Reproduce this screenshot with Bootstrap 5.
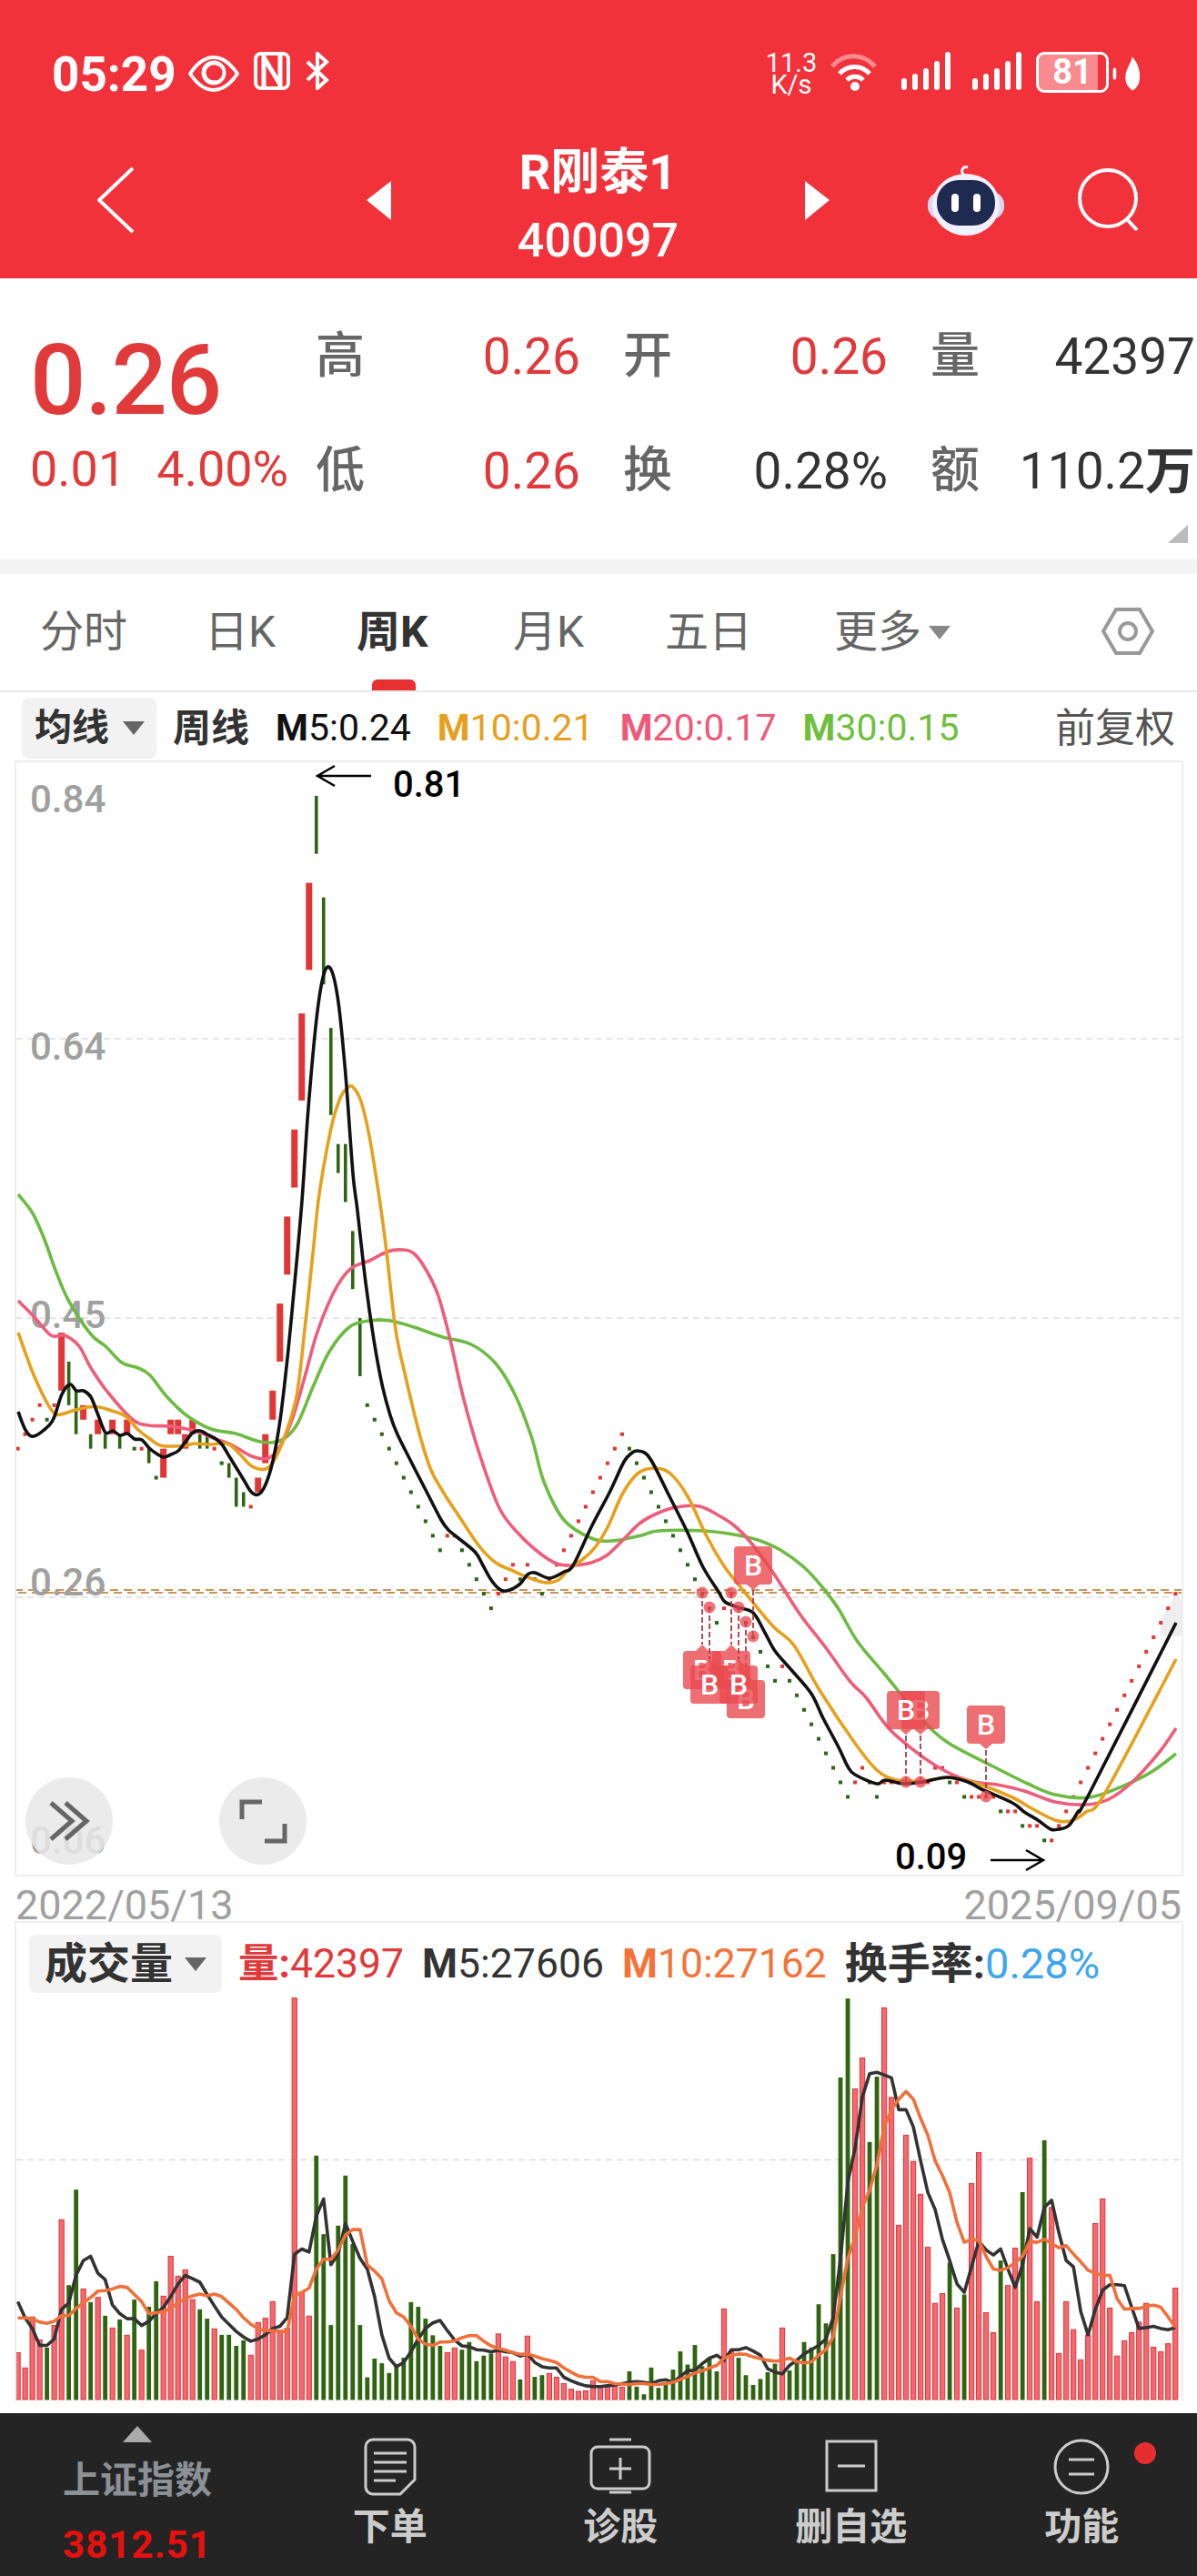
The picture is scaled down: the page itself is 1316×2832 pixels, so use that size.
<!DOCTYPE html>
<html lang="zh">
<head>
<meta charset="UTF-8" />
<meta name="viewport" content="width=device-width, initial-scale=1.0"/>
<title>R刚泰1 400097</title>
<link href="https://cdn.jsdelivr.net/npm/bootstrap@5.3.0/dist/css/bootstrap.min.css" rel="stylesheet" />
<style>
body { width: 1316px; height: 2832px; overflow: hidden; background: #fff; font-family: Roboto, "Noto Sans CJK SC", sans-serif; color: #333; }
svg { display: block; }

.app-head { height: 306px; background: #f1323b; color: #fff; }
.status-row { height: 150px; padding: 57px 62px 0 57px; align-items: flex-start; }
.clock { font-size: 53px; font-weight: 700; line-height: 50px; margin-right: 13px; }
.speed { font-size: 29px; line-height: 24px; width: 58px; text-align: center; margin-right: 13px; }
.batt { position: relative; width: 80px; height: 45px; border: 3px solid #fff; border-radius: 9px; background: linear-gradient(90deg, #f98a8f 88%, transparent 88%); font-size: 38px; font-weight: 700; line-height: 38px; text-align: center; }
.title-bar { height: 156px; padding: 0 0 16px 107px; align-items: center; }
.stock-name { width: 455px; text-align: center; margin-top: 16px; }
.stock-name b { display: block; font-size: 54px; line-height: 60px; }
.stock-name span { display: block; font-size: 52px; font-weight: 500; line-height: 62px; margin-top: 14px; }

.quote { position: relative; height: 309px; padding-top: 51px; }
.quote-left { width: 347px; padding-left: 33px; }
.big-price { font-size: 108px; font-weight: 500; line-height: 96px; margin: 13px 0 15px 0; color: #e03a3a; letter-spacing: -1px; }
.sub-price { font-size: 54px; line-height: 70px; color: #e03a3a; gap: 34px; }
.quote-grid { display: grid; grid-template-columns: repeat(3, 291px); grid-auto-rows: 70px; align-self: flex-start; column-gap: 47px; row-gap: 56px; }
.qcell { display: flex; justify-content: space-between; font-size: 55px; line-height: 70px; white-space: nowrap; }
.qcell i { font-style: normal; color: #666; font-size: 54px; font-weight: 500; }
.up { color: #e0393c; }
.corner { position: absolute; right: 10px; bottom: 18px; border-left: 22px solid transparent; border-bottom: 20px solid #bbb; }
.band { height: 16px; background: #f4f4f4; }

.tabs { height: 130px; border-bottom: 2px solid #e8e8e8; padding-left: 44px; position: relative; display: grid; grid-template-columns: 181px 167px 172px 167px 186px auto; justify-content: start; font-size: 48px; line-height: 128px; color: #666; }
.tabs span { white-space: nowrap; }
.tabs .on { color: #333; font-weight: 700; position: relative; display: block; }
.tabs .on::after { content: ""; position: absolute; left: 17px; width: 48px; height: 12px; bottom: 0; background: #e83030; border-radius: 6px 6px 0 0; }
.tri-down { display: inline-block; border-left: 12px solid transparent; border-right: 12px solid transparent; border-top: 15px solid #888; vertical-align: middle; }

.ma-row { height: 75px; padding: 4px 24px 0; font-size: 41px; white-space: nowrap; align-items: center; gap: 29px; }
.drop { background: #f2f2f2; border-radius: 8px; font-weight: 700; color: #333; display: flex; align-items: center; }
.drop .tri-down { border-top-color: #666; }
.ma-row .drop { width: 148px; height: 67px; padding-left: 14px; gap: 15px; font-size: 41px; margin-right: -11px; }
.ma-name { font-size: 42px; }
.fq { font-size: 44px; color: #555; }
.mm { font-weight: 700; }
.c-5 { color: #111; } .c-10 { color: #e6a01e; } .c-20 { color: #f0587a; } .c-30 { color: #6fbf3c; }

.kbox { margin-left: 16px; width: 1285px; border: 2px solid #eee; }
.date-row { height: 49px; padding: 8px 17px 0; font-size: 45px; line-height: 48px; color: #a0a0a0; }
.vbox { border-bottom: 0; margin-bottom: 13px; }
.vhead { height: 64px; margin: 13px 0 4px 14px; font-size: 44.5px; white-space: nowrap; align-items: center; gap: 20px; }
.vhead .drop { width: 212px; height: 64px; padding-left: 17px; gap: 13px; font-size: 47px; margin-right: -2px; }
.vhead b { font-weight: 700; }
.vhead .turn { font-size: 47px; }

.axis { font-family: Roboto, sans-serif; font-size: 42px; font-weight: 500; fill: #a0a0a0; }
.note { font-family: Roboto, sans-serif; font-size: 40px; font-weight: 500; fill: #000; }
.pin-b { font-family: Roboto, sans-serif; font-size: 32px; font-weight: 500; fill: #fff; text-anchor: middle; }

.foot { height: 179px; background: #242424; display: grid; grid-template-columns: 302px repeat(4, 1fr); text-align: center; color: #ccc; position: relative; }
.foot-item { position: relative; height: 179px; padding-top: 27px; font-size: 41px; font-weight: 700; line-height: 48px; }
.foot-item svg { margin: 0 auto; height: 64px; }
.foot-item div { margin-top: 10px; }
.foot-item .index-up { width: 0; margin: -13px auto 0; border-left: 16px solid transparent; border-right: 16px solid transparent; border-bottom: 18px solid #aaa; }
.foot-item .index-name { color: #8a9095; margin-top: 18px; }
.foot-item .index-val { color: #e8100f; font-size: 42px; letter-spacing: 1px; margin-top: 23px; }
.red-dot { position: absolute; left: 184px; top: 32px; width: 24px; height: 24px; border-radius: 50%; background: #e62e2e; }
</style>
</head>
<body>

<header class="app-head">
  <div class="status-row d-flex">
    <span class="clock">05:29</span>
    <svg width="56" height="40" viewBox="0 0 56 40" class="me-2 mt-1" fill="none" stroke="#fff" stroke-width="4"><path d="M2 20C10 8 19 2 28 2s18 6 26 18c-8 12-17 18-26 18S10 32 2 20z"/><circle cx="28" cy="19" r="11" stroke-width="5"/><path d="M28 12a7 7 0 0 1 2 14" stroke="#f1323b" stroke-width="3"/></svg>
    <svg width="40" height="42" viewBox="0 0 40 42" class="ms-2 me-3" fill="none" stroke="#fff" stroke-width="4"><rect x="2" y="2" width="36" height="38" rx="6"/><path d="M11 4v34M29 4v34M11 6l18 30" stroke-width="5"/></svg>
    <svg width="28" height="42" viewBox="0 0 28 42" fill="none" stroke="#fff" stroke-width="4"><path d="M3 11l21 20-10 9V2l10 9L3 31"/></svg>
    <span class="ms-auto speed">11.3<br>K/s</span>
    <svg width="55" height="44" viewBox="0 0 55 44" fill="none" class="me-4"><path d="M3 16C15 1 37 1 50 16" stroke="#f98a8f" stroke-width="5"/><path d="M11 24c9-10 24-10 33 0M19 31c5-5 13-5 18 0" stroke="#fff" stroke-width="5"/><circle cx="28" cy="38" r="5" fill="#fff"/></svg>
    <svg width="54" height="42" viewBox="0 0 54 42" fill="#fff" class="me-4"><rect x="0" y="29" width="6" height="13" rx="3"/><rect x="12" y="24" width="6" height="18" rx="3"/><rect x="24" y="18" width="6" height="24" rx="3"/><rect x="36" y="10" width="6" height="32" rx="3"/><rect x="48" y="0" width="6" height="42" rx="3"/></svg>
    <svg width="54" height="42" viewBox="0 0 54 42" fill="#fff" class="me-3"><rect x="0" y="29" width="6" height="13" rx="3"/><rect x="12" y="24" width="6" height="18" rx="3"/><rect x="24" y="18" width="6" height="24" rx="3"/><rect x="36" y="10" width="6" height="32" rx="3"/><rect x="48" y="0" width="6" height="42" rx="3"/></svg>
    <span class="batt">81</span>
    <svg width="35" height="40" viewBox="0 0 38 40" fill="#fff" class="mt-1"><rect x="5" y="13" width="4" height="14" rx="2"/><path d="M28 0c8 9 9 17 9 24 0 8-4 14-9 16-5-4-9-9-8-18 1-8 6-14 8-22z"/></svg>
  </div>
  <div class="title-bar d-flex">
    <svg width="40" height="74" viewBox="0 0 40 74" fill="none" stroke="#fff" stroke-width="4"><path d="M39 2L2 37l37 35"/></svg>
    <svg width="27" height="43" viewBox="0 0 27 43" fill="#fff" style="margin-left:256px"><path d="M27 0v43L0 21z"/></svg>
    <div class="stock-name"><b>R刚泰1</b><span>400097</span></div>
    <svg width="27" height="43" viewBox="0 0 27 43" fill="#fff"><path d="M0 0v43l27-22z"/></svg>
    <svg width="84" height="78" viewBox="0 0 84 78" style="margin-left:108px"><path d="M40 12c-5-5-1-11 4-9" fill="none" stroke="#f2f0fc" stroke-width="3"/><rect x="0" y="30" width="84" height="30" rx="14" fill="#d9d5f2"/><ellipse cx="42" cy="44" rx="37" ry="34" fill="#f2f0fc"/><rect x="10" y="17" width="64" height="50" rx="24" fill="#1e2a4f"/><rect x="26" y="32" width="8" height="20" rx="4" fill="#fff"/><rect x="50" y="32" width="8" height="20" rx="4" fill="#fff"/></svg>
    <svg width="68" height="70" viewBox="0 0 68 70" fill="none" stroke="#fff" stroke-width="4" style="margin-left:81px"><ellipse cx="33" cy="33" rx="31" ry="31"/><path d="M54 56l11 12"/></svg>
  </div>
</header>

<section class="quote d-flex">
  <div class="quote-left">
    <div class="big-price">0.26</div>
    <div class="sub-price d-flex"><span>0.01</span><span>4.00%</span></div>
  </div>
  <div class="quote-grid">
    <div class="qcell"><i>高</i><span class="up">0.26</span></div>
    <div class="qcell"><i>开</i><span class="up">0.26</span></div>
    <div class="qcell"><i>量</i><span>42397</span></div>
    <div class="qcell"><i>低</i><span class="up">0.26</span></div>
    <div class="qcell"><i>换</i><span>0.28%</span></div>
    <div class="qcell"><i>额</i><span>110.2<b>万</b></span></div>
  </div>
  <div class="corner"></div>
</section>
<div class="band"></div>

<nav class="tabs">
  <span>分时</span>
  <span>日K</span>
  <span class="on">周K</span>
  <span>月K</span>
  <span>五日</span>
  <span class="d-flex align-items-center gap-2">更多<em class="tri-down"></em></span>
  <svg class="position-absolute" style="left:1211px;top:36px" width="58" height="54" viewBox="0 0 58 54" fill="none" stroke="#999" stroke-width="4"><path d="M16 3h26l14 24-14 24H16L2 27z"/><circle cx="29" cy="27" r="9"/></svg>
</nav>

<div class="ma-row d-flex">
  <div class="drop">均线<em class="tri-down"></em></div>
  <b class="ma-name">周线</b>
  <span class="c-5"><span class="mm">M</span>5:0.24</span>
  <span class="c-10"><span class="mm">M</span>10:0.21</span>
  <span class="c-20"><span class="mm">M</span>20:0.17</span>
  <span class="c-30"><span class="mm">M</span>30:0.15</span>
  <span class="ms-auto fq">前复权</span>
</div>

<div class="kbox">
  <svg id="kchart" width="1281" height="1223" viewBox="18 838 1281 1223"></svg>
</div>
<div class="date-row d-flex justify-content-between"><span>2022/05/13</span><span>2025/09/05</span></div>

<div class="kbox vbox">
  <div class="vhead d-flex">
    <div class="drop">成交量<em class="tri-down"></em></div>
    <span class="up"><b>量:</b>42397</span>
    <span><b>M</b>5:27606</span>
    <span style="color:#f47338"><b>M</b>10:27162</span>
    <span class="turn"><b>换手率:</b><span style="color:#3ea6ee">0.28%</span></span>
  </div>
  <svg id="vchart" width="1281" height="445" viewBox="18 2195 1281 445"></svg>
</div>

<footer class="foot">
  <div class="foot-item">
    <div class="index-up"></div>
    <div class="index-name">上证指数</div>
    <div class="index-val">3812.51</div>
  </div>
  <div class="foot-item">
    <svg width="58" height="64" viewBox="0 0 58 64" fill="none" stroke="#ccc" stroke-width="3"><path d="M10 2h38a8 8 0 0 1 8 8v36L40 62H10a8 8 0 0 1-8-8V10a8 8 0 0 1 8-8z"/><path d="M11 17h36M11 27h36M11 37h36M11 47h24"/></svg>
    <div>下单</div>
  </div>
  <div class="foot-item">
    <svg width="68" height="64" viewBox="0 0 68 64" fill="none" stroke="#ccc" stroke-width="3"><path d="M22 2h24"/><rect x="2" y="10" width="64" height="46" rx="7"/><path d="M22 60h24M34 22v24M22 34h24"/></svg>
    <div>诊股</div>
  </div>
  <div class="foot-item">
    <svg width="58" height="60" viewBox="0 0 58 60" fill="none" stroke="#ccc" stroke-width="3"><rect x="2" y="2" width="54" height="54"/><path d="M14 29h30"/></svg>
    <div>删自选</div>
  </div>
  <div class="foot-item">
    <svg width="62" height="62" viewBox="0 0 62 62" fill="none" stroke="#ccc" stroke-width="3"><circle cx="31" cy="31" r="29"/><path d="M17 23h28M17 39h28"/></svg>
    <div>功能</div>
    <span class="red-dot"></span>
  </div>
</footer>

<script>
const RED = '#e23636', GREEN = '#2f6414';
const barX = i => 19.6 + 8.004 * i;

// weekly bars in cents: [colour, high, low], a single value is a flat week
const bars = [
  ['r',36],['r',37],['r',38],['r',39],['g',38],['r',39],['r',44,40],['g',42,39],['g',40,37],['r',39,38],
  ['g',37,36],['r',38,37],['g',37,36],['r',38,37],['g',37,36],['r',38,37],['g',36],['r',36],['g',36,35],['g',34],
  ['r',36,34],['r',38,37],['r',38,37],['r',37,36],['r',38,37],['g',37,36],['g',37,36],['r',36],['g',35],['g',35,34],
  ['g',34,32],['g',33,32],['r',32],['r',34,33],['r',37,35],['r',40,38],['r',46,42],['r',52,48],['r',58,54],['r',66,60],
  ['r',75,69],['g',81,77],['g',74,68],['g',65,59],['g',57,55],['g',57,53],['g',51,47],['g',45,41],['g',39],['g',38],
  ['g',37],['g',36],['g',35],['g',34],['g',33],['g',32],['g',31],['g',30],['g',29],['r',30],
  ['r',30],['g',29],['g',28],['g',27],['g',26],['g',25],['r',26],['r',27],['r',28],['g',27],
  ['r',28],['g',27],['g',26],['r',27],['r',28],['r',29],['r',30],['r',31],['r',32],['r',33],
  ['r',34],['r',35],['r',36],['r',37],['g',36],['g',35],['g',34],['g',33],['g',32],['g',31],
  ['g',30],['g',29],['g',28],['g',27],['g',26],['g',25],['g',24],['r',25],['r',26],['r',25],
  ['g',24],['g',23],['g',22],['g',21],['g',20],['r',21],['g',20],['g',19],['g',18],['g',17],
  ['g',16],['g',15],['g',14],['g',13],['g',12],['r',13],['r',14],['g',13],['g',12],['r',13],
  ['r',13],['r',13],['r',13],['r',13],['r',13],['r',13],['r',14],['r',14],['g',13],['r',13],
  ['g',12],['r',12],['r',12],['r',12],['r',12],['g',11],['r',11],['r',11],['g',10],['r',10],
  ['r',10],['g',9],['r',9],['r',10],['r',11],['r',12],['r',13],['r',14],['r',15],['r',16],
  ['r',17],['r',18],['r',19],['r',20],['r',21],['r',22],['r',23],['r',24],['r',25],['r',26]
];
const priceY = c => 1544.8 + 15.95 * (39 - c);

const ma5 = [[20,1552],[28,1572],[37,1579],[54,1567],[60,1557],[68,1533],[77,1522],[84,1529],[92,1529],[100,1536],[108,1556],[116,1575],[124,1573],[132,1578],[140,1576],[148,1582],[156,1583],[164,1592],[172,1598],[180,1602],[188,1599],[196,1595],[204,1585],[212,1575],[220,1573],[228,1577],[236,1581],[244,1588],[252,1601],[260,1614],[268,1627],[276,1640],[284,1643],[292,1632],[300,1606],[308,1561],[316,1493],[324,1410],[332,1320],[339,1218],[348,1120],[356,1071],[364,1066],[372,1102],[380,1182],[388,1290],[393,1331],[402,1410],[411,1473],[420,1522],[429,1556],[437,1577],[453,1609],[469,1640],[485,1671],[493,1682],[509,1695],[523,1707],[531,1721],[540,1737],[549,1747],[557,1749],[571,1742],[580,1731],[588,1729],[604,1735],[620,1728],[630,1721],[650,1679],[671,1639],[686,1607],[695,1597],[701,1595],[710,1598],[718,1609],[735,1643],[756,1685],[773,1723],[790,1750],[797,1761],[811,1767],[828,1773],[841,1795],[852,1815],[871,1837],[892,1862],[905,1889],[922,1921],[932,1942],[940,1951],[964,1961],[973,1957],[994,1961],[1015,1959],[1041,1954],[1064,1959],[1079,1967],[1113,1982],[1126,1992],[1141,2001],[1155,2011],[1164,2011],[1175,2007],[1185,1992],[1198,1971],[1293,1784]];
const ma10 = [[20,1465],[36,1509],[51,1541],[60,1554],[67,1555],[80,1551],[96,1547],[109,1547],[123,1551],[138,1557],[152,1572],[165,1582],[176,1589],[190,1590],[205,1589],[214,1587],[232,1588],[250,1587],[263,1598],[277,1612],[292,1615],[301,1606],[312,1582],[326,1535],[335,1462],[344,1378],[350,1320],[357,1276],[366,1232],[375,1205],[382,1196],[388,1195],[397,1211],[406,1249],[416,1310],[424,1368],[435,1462],[446,1514],[460,1572],[473,1614],[487,1640],[504,1666],[527,1700],[545,1718],[562,1726],[580,1734],[600,1740],[614,1737],[625,1726],[650,1706],[667,1681],[684,1643],[701,1620],[720,1614],[737,1620],[756,1645],[777,1689],[797,1723],[820,1752],[850,1788],[873,1809],[901,1858],[939,1915],[964,1946],[986,1957],[1015,1958],[1045,1954],[1075,1961],[1113,1976],[1134,1988],[1160,2001],[1177,2002],[1194,1992],[1215,1971],[1293,1824]];
const ma20 = [[20,1430],[36,1446],[56,1468],[71,1468],[87,1480],[100,1504],[118,1530],[145,1560],[163,1567],[187,1568],[214,1573],[237,1582],[254,1588],[277,1601],[295,1603],[308,1590],[321,1561],[335,1514],[348,1467],[362,1431],[375,1407],[388,1393],[406,1386],[426,1376],[442,1374],[455,1378],[469,1397],[482,1425],[495,1473],[509,1535],[527,1598],[549,1658],[571,1687],[594,1708],[612,1719],[629,1721],[650,1718],[667,1710],[684,1694],[703,1675],[722,1664],[743,1657],[769,1656],[790,1666],[807,1677],[824,1694],[850,1729],[879,1774],[909,1813],[935,1849],[952,1866],[977,1900],[1011,1929],[1041,1948],[1071,1959],[1096,1962],[1126,1969],[1160,1981],[1194,1984],[1219,1978],[1245,1959],[1274,1927],[1293,1900]];
const ma30 = [[20,1313],[36,1334],[49,1363],[62,1399],[76,1431],[100,1467],[116,1480],[134,1498],[152,1504],[165,1512],[183,1535],[205,1556],[232,1571],[259,1576],[286,1585],[308,1584],[326,1567],[344,1525],[362,1486],[384,1459],[406,1452],[429,1452],[455,1459],[487,1470],[518,1478],[545,1499],[567,1535],[585,1582],[598,1629],[620,1671],[650,1691],[673,1694],[705,1688],[724,1683],[773,1683],[807,1687],[833,1693],[858,1704],[884,1723],[905,1746],[922,1769],[943,1805],[973,1841],[1011,1887],[1041,1915],[1092,1942],[1130,1961],[1160,1973],[1198,1976],[1236,1963],[1266,1948],[1293,1928]];

// [price point x, y, top of the B box]
const pins = [[820,1783,1847],[772,1751,1815],[804,1751,1815],[780,1767,1831],[812,1767,1831],[828,1799,1700],[1012,1959,1859],[996,1959,1859],[1084,1975,1875]];

function smooth(p) {
  let d = `M${p[0][0]} ${p[0][1]}`;
  for (let i = 0; i < p.length - 1; i++) {
    const a = p[i - 1] || p[i], b = p[i], c = p[i + 1], e = p[i + 2] || c;
    const x1 = b[0] + (c[0] - a[0]) / 6, y1 = b[1] + (c[1] - a[1]) / 6;
    const x2 = c[0] - (e[0] - b[0]) / 6, y2 = c[1] - (e[1] - b[1]) / 6;
    d += `C${x1.toFixed(1)} ${y1.toFixed(1)} ${x2.toFixed(1)} ${y2.toFixed(1)} ${c[0]} ${c[1]}`;
  }
  return d;
}
const linePath = (p, col, w) => `<path d="${smooth(p)}" fill="none" stroke="${col}" stroke-width="${w}" stroke-linejoin="round"/>`;

let k = '';
[1142, 1449, 1756].forEach(y => { k += `<line x1="18" x2="1299" y1="${y}" y2="${y}" stroke="#ddd" stroke-width="1.5" stroke-dasharray="7 5"/>`; });
k += `<line x1="16" x2="1299" y1="1748" y2="1748" stroke="#c8965a" stroke-width="2" stroke-dasharray="9 6"/>`;
k += `<line x1="20" x2="1299" y1="1751" y2="1751" stroke="#c8965a" stroke-width="2" stroke-dasharray="9 6"/>`;
k += `<path d="M1300 1756h-9l-15 25v18h24z" fill="#eee"/>`;

[['0.84',893],['0.64',1165],['0.45',1460],['0.26',1754],['0.06',2038]].forEach(a => {
  k += `<text class="axis" x="33" y="${a[1]}">${a[0]}</text>`;
});

bars.forEach((b, i) => {
  const x = barX(i), col = b[0] == 'r' ? RED : GREEN;
  if (b.length == 2) {
    k += `<rect x="${x - 2}" y="${priceY(b[1]) - 2}" width="4" height="4" fill="${col}"/>`;
  } else {
    const w = b[0] == 'r' ? 7 : 3.6;
    k += `<rect x="${x - w / 2}" y="${priceY(b[1])}" width="${w}" height="${priceY(b[2]) - priceY(b[1])}" fill="${col}"/>`;
  }
});

k += linePath(ma30, '#6dbb42', 3.6);
k += linePath(ma20, '#ee5d7a', 3.6);
k += linePath(ma10, '#e6a11c', 3.6);
k += linePath(ma5, '#111', 3.6);

pins.forEach(p => {
  const [x, y, top] = p, above = top < y;
  const tip = above ? top + 48 : top - 7;
  const edge = above ? top + 42 : top;
  k += `<line x1="${x}" x2="${x}" y1="${y}" y2="${tip}" stroke="#a83a44" stroke-width="1.8" stroke-dasharray="6 3"/>`;
  k += `<circle cx="${x}" cy="${y}" r="6.5" fill="#e8464c" opacity=".75"/>`;
  k += `<path d="M${x - 7} ${edge}L${x} ${tip}L${x + 7} ${edge}z" fill="#ea4a50" opacity=".8"/>`;
  k += `<rect x="${x - 21}" y="${top}" width="42" height="42" rx="4" fill="#ea4a50" opacity=".8"/>`;
  k += `<text class="pin-b" x="${x}" y="${top + 32}">B</text>`;
});

k += `<path d="M408 853H350M368 842l-19 11 19 11" fill="none" stroke="#000" stroke-width="2.5"/>`;
k += `<text class="note" x="432" y="876">0.81</text>`;
k += `<text class="note" x="984" y="2055">0.09</text>`;
k += `<path d="M1089 2045H1147M1128 2034l19 11-19 11" fill="none" stroke="#000" stroke-width="2.5"/>`;

// the two round buttons float over the axis
[76, 289].forEach(x => { k += `<ellipse cx="${x}" cy="2002" rx="48" ry="48" fill="#e8e8e8" opacity=".85"/>`; });
k += `<path d="M56 1982l23 20-23 20M72 1982l23 20-23 20" fill="none" stroke="#666" stroke-width="5"/>`;
k += `<path d="M288 1981h-22v19M291 2024h22v-19" fill="none" stroke="#666" stroke-width="5"/>`;
document.getElementById('kchart').innerHTML = k;

// volume: tops of the bars, bar by bar, as read from the chart
const vol = 'r1042 r1078 r958 r1012 g1030 r978 r729 g883 g658 r892 g923 r912 g955 r984 g964 r1001 g917 r1036 g934 g874 r909 r815 r862 r847 r917 g940 g962 r986 g1000 g1000 g1026 g1013 r1048 r971 r961 r922 r990 r985 r207 r900 r956 g578 g763 g977 g743 g625 g786 g977 g1100 g1056 g1067 g1090 g1075 g1054 g923 g934 g962 g1001 g1026 r1042 r1031 g1035 g1017 g1062 g1049 g1044 r998 r1052 r1063 g1105 r1003 g1099 g1095 r1091 r1100 r1115 r1128 r1133 r1132 r1108 r1120 r1120 r1120 r1123 g1086 g1122 g1140 g1077 g1125 g1117 g1082 g1039 g1070 g1024 g1074 g1055 g1086 r939 r1040 g1054 g1095 g1118 g1104 g1088 g1068 r984 g1084 g1066 g1017 g1030 g928 g973 g810 g394 g208 r421 r348 g546 g392 r230 r441 r742 r530 r592 r669 r794 r926 r903 g830 r937 g905 r644 r571 r948 r995 g825 r884 r796 g664 r584 r922 g542 r700 r1044 r922 r988 r1059 r1000 r738 r680 r937 r1050 r1014 r995 r970 r926 r1029 r1040 r1021 r890'.split(' ');
const vm5 = [922,960,985,1025,1025,1010,940,925,860,825,815,855,870,930,950,962,962,978,968,950,935,910,880,860,868,876,905,932,958,975,992,1005,1015,1010,1000,985,980,960,810,798,805,720,680,835,810,738,780,820,845,910,1000,1055,1075,1065,1040,1010,985,972,966,990,1012,1026,1028,1035,1036,1040,1036,1040,1042,1050,1045,1065,1075,1078,1078,1100,1108,1115,1120,1122,1122,1120,1118,1115,1112,1110,1112,1115,1108,1106,1112,1098,1084,1084,1068,1055,1048,1060,1035,1035,1030,1038,1048,1080,1088,1092,1072,1060,1045,1035,1025,1010,960,820,640,560,440,385,382,388,395,470,470,510,590,665,705,775,825,880,900,840,780,800,812,798,845,888,835,750,770,700,683,760,825,840,945,1000,940,895,882,882,884,935,985,983,980,985,988,983];
const vm10 = [960,960,962,970,973,968,955,955,938,925,912,897,896,892,886,888,905,922,950,948,945,938,925,915,908,904,908,904,910,925,940,960,975,985,990,990,992,992,908,900,890,845,822,822,800,765,752,752,835,850,868,920,948,958,980,1010,1022,1025,1017,1017,1014,1007,1002,1002,1015,1026,1032,1036,1042,1046,1045,1050,1056,1060,1065,1078,1088,1097,1100,1100,1110,1110,1115,1116,1117,1115,1115,1117,1117,1115,1112,1105,1098,1090,1085,1078,1072,1055,1048,1045,1046,1052,1056,1060,1062,1060,1055,1063,1066,1064,1048,1035,1005,910,820,770,700,660,600,510,470,445,427,445,490,530,590,625,665,735,782,775,778,815,845,848,842,830,815,780,782,775,785,795,790,810,828,848,855,860,860,915,940,938,938,933,930,935,958,982];
const volY = z => 2100 + z / 2.142;

let v = `<line x1="18" x2="1299" y1="2374.5" y2="2374.5" stroke="#ddd" stroke-width="1.5" stroke-dasharray="7 5"/>`;
vol.forEach((b, i) => {
  const x = barX(i), top = volY(+b.slice(1));
  if (b[0] == 'r') {
    v += `<rect x="${x - 2.6}" y="${top}" width="5.2" height="${2638 - top}" fill="#f4686e" stroke="#d9363b" stroke-width="1"/>`;
  } else {
    v += `<rect x="${x - 2.4}" y="${top}" width="4.8" height="${2638.5 - top}" fill="#2f6410"/>`;
  }
});
const volLine = (arr, col) => {
  const pts = arr.map((z, i) => `${barX(i).toFixed(1)},${volY(z).toFixed(1)}`).join(' ');
  return `<polyline points="${pts}" fill="none" stroke="${col}" stroke-width="3.6" stroke-linejoin="round"/>`;
};
v += volLine(vm5, '#333') + volLine(vm10, '#f0703c');
document.getElementById('vchart').innerHTML = v;
</script>
</body>
</html>
